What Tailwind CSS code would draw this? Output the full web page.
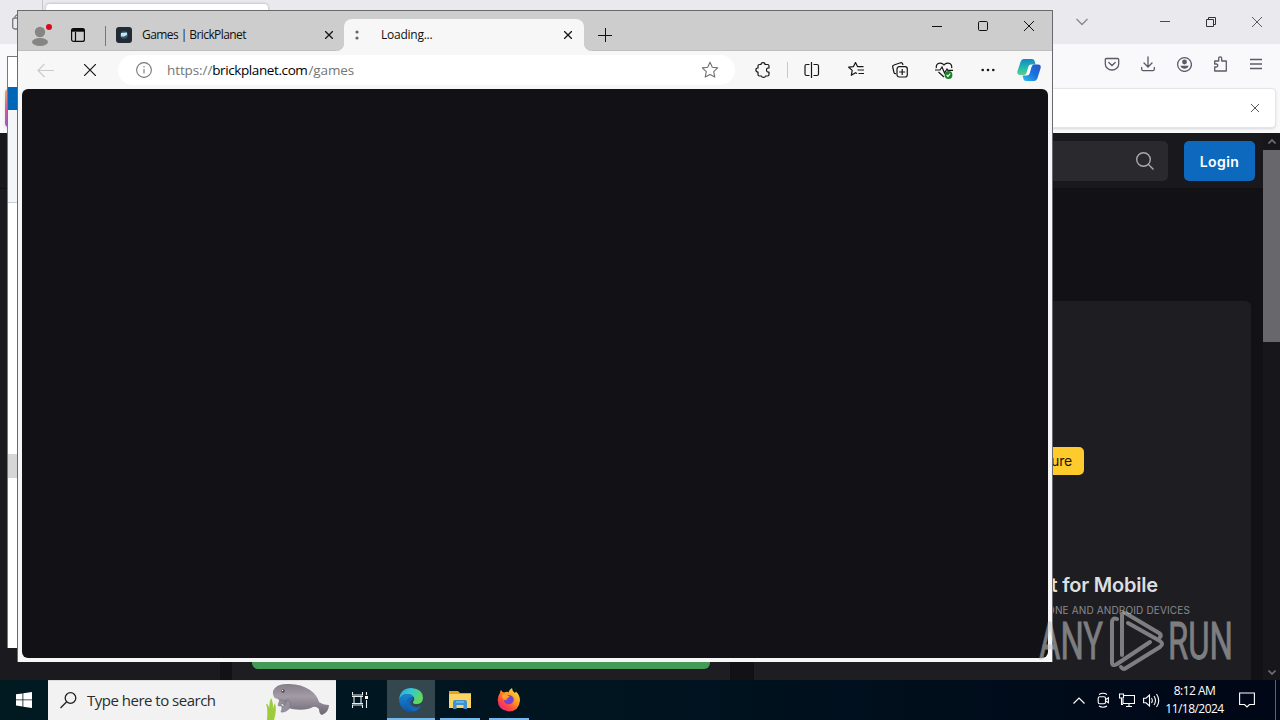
<!DOCTYPE html>
<html lang="en">
<head>
  <meta charset="UTF-8" />
  <meta name="viewport" content="width=device-width, initial-scale=1.0" />
  <title>Desktop</title>
  <script src="https://cdn.jsdelivr.net/npm/@tailwindcss/browser@4"></script>
</head>
<body class="bg-[#121216] overflow-hidden">
<div class="relative w-[1280px] h-[720px] overflow-hidden flex flex-col font-['Open_Sans','Noto_Sans',sans-serif]">

  <!-- Firefox window -->
  <div class="h-[680px] flex flex-col shrink-0">
    <div class="h-11 bg-[#eaeaee] flex justify-between shrink-0">
      <div class="flex">
        <div class="w-[43px] h-11 border-r border-[#c4c4ca] pl-3 pt-3.5">
          <svg class="w-4 h-4" viewBox="0 0 16 16" fill="none" stroke="#77777d" stroke-width="1.3"><rect x=".7" y="4" width="12" height="11" rx="2" /><path d="M3 3.5Q3 1 6 1h6" /></svg>
        </div>
        <div class="w-[222px] h-9 mt-1 ml-[3px] bg-white rounded shadow-[0_0_3px_rgba(0,0,0,0.3)]"></div>
      </div>
      <div class="flex text-[#4a4a50]">
        <div class="w-[46px] h-11 mr-[37px] flex items-center justify-center">
          <svg class="w-3 h-3" viewBox="0 0 12 12" fill="none" stroke="#88888e" stroke-width="1.3"><path d="M.5 3 6 8.5 11.5 3" /></svg>
        </div>
        <div class="w-[46px] h-11 flex items-center justify-center">
          <svg class="w-2.5 h-2.5" viewBox="0 0 10 10" fill="none" stroke="currentColor"><path d="M0 4.5h10" /></svg>
        </div>
        <div class="w-[46px] h-11 flex items-center justify-center">
          <svg class="w-2.5 h-2.5" viewBox="0 0 10 10" fill="none" stroke="#333338"><path d="M.5 2.5h7v7h-7zM2.5 2.5v-2h7v7h-2" /></svg>
        </div>
        <div class="w-[46px] h-11 flex items-center justify-center">
          <svg class="w-2.5 h-2.5" viewBox="0 0 10 10" fill="none" stroke="currentColor" stroke-width=".9"><path d="M0 0l10 10M10 0 0 10" /></svg>
        </div>
      </div>
    </div>
    <div class="h-10 bg-[#f9f9fb] flex items-center justify-end pr-1.5 shrink-0 text-[#5b5b66]">
      <div class="w-9 flex justify-center"><svg class="w-4 h-4" viewBox="0 0 16 16" fill="none" stroke="currentColor" stroke-width="1.3" stroke-linecap="round"><path d="M2.5 2.5h11q1.2 0 1.2 1.2V8a6.7 6 0 0 1-13.4 0V3.7q0-1.2 1.2-1.2zM4.8 6.5 8 9.5l3.2-3" /></svg></div>
      <div class="w-9 flex justify-center"><svg class="w-4 h-4" viewBox="0 0 16 16" fill="none" stroke="currentColor" stroke-width="1.3" stroke-linecap="round"><path d="M8 .8v9.7M4 7l4 4 4-4M1.7 11.5v1.7q0 1.5 1.5 1.5h9.6q1.5 0 1.5-1.5v-1.7" /></svg></div>
      <div class="w-9 flex justify-center"><svg class="w-4 h-4" viewBox="0 0 16 16" fill="none" stroke="currentColor" stroke-width="1.3"><circle cx="8.5" cy="8.5" r="6.9" /><circle cx="8.5" cy="6" r="2.4" fill="currentColor" stroke="none" /><path d="M4.3 9.7h8.4q-1.2 3-4.2 3t-4.2-3z" fill="currentColor" stroke="none" /></svg></div>
      <div class="w-9 flex justify-center"><svg class="w-4 h-4" viewBox="0 0 16 16" fill="none" stroke="currentColor" stroke-width="1.3" stroke-linejoin="round"><path d="M2.7 15V11h1.5q1.6 0 1.6-1.5T4.2 8H2.700V5h4V2.500Q6.700.8 8.200.8t1.500 1.700V5h4.600v10z" /></svg></div>
      <div class="w-9 flex justify-center"><svg class="w-4 h-4" viewBox="0 0 16 16" fill="none" stroke="currentColor" stroke-width="1.3"><path d="M2 3.5h12M2 8h12M2 12.5h12" /></svg></div>
    </div>
    <div class="h-[49px] bg-[#f9f9fb] pt-1 pl-[5px] pr-1 shrink-0">
      <div class="h-10 bg-white rounded border border-[#e6e6ea] shadow-sm flex items-center justify-between pr-4">
        <div class="w-9 h-[38px] rounded-l -ml-px bg-linear-to-b from-[#f2a45c] via-[#dc5a90] to-[#9059c8]"></div>
        <svg class="w-2 h-2" viewBox="0 0 8 8" fill="none" stroke="#55555c"><path d="M0 0l8 8M8 0 0 8" /></svg>
      </div>
    </div>

    <!-- Page in Firefox -->
    <div class="flex-1 min-h-0 flex">
      <div class="flex-1 bg-[#121216] flex flex-col">
        <div class="h-14 bg-[#19191d] border-b border-[#101013] flex items-center justify-end gap-4 pr-2 shrink-0">
          <div class="w-[500px] h-10 bg-[#2a2a2e] rounded-[5px] flex items-center justify-end pr-3.5">
            <svg class="w-[18px] h-[18px]" viewBox="0 0 18 18" fill="none" stroke="#aaaaae" stroke-width="1.4"><circle cx="7.5" cy="7.5" r="6.8" /><path d="M12.3 12.3 17.5 17.5" /></svg>
          </div>
          <div class="w-[71px] h-10 bg-[#0d69bd] rounded-[5px] flex items-center justify-center text-white text-sm font-semibold font-['Inter'] tracking-[0.4px] pt-0.5">Login</div>
        </div>
        <div class="flex-1 min-h-0 flex">
          <div class="w-[220px] bg-[#1b1b1f]"></div>
          <div class="w-[498px] ml-3 bg-[#1e1e22] flex flex-col justify-end px-5 pb-[11px]">
            <div class="h-10 rounded-md bg-[#459a58]"></div>
          </div>
          <div class="w-[497px] ml-6 mt-28 bg-[#1e1e22] rounded-t-md flex flex-col items-end font-['Inter']">
            <div class="mt-[146px] mr-[167px] w-[110px] h-7 bg-[#ffca2c] rounded-[5px] flex items-center justify-end pr-3 text-sm tracking-[-0.2px] text-[#1c1606]">Feature</div>
            <div class="mt-24 mr-[93px] text-[20px] leading-7 font-semibold tracking-[-0.2px] text-[#dedee0] whitespace-nowrap">BrickPlanet for Mobile</div>
            <div class="mt-[3px] mr-[61px] text-[10px] leading-4 text-[#8a8a8e] tracking-[0.15px] whitespace-nowrap">FOR IPHONE AND ANDROID DEVICES</div>
          </div>
        </div>
      </div>
      <div class="w-[17px] bg-[#17171b] flex flex-col items-center">
        <div class="h-[17px] flex items-center"><svg class="w-2 h-[5px]" viewBox="0 0 8 5" fill="none" stroke="#707074" stroke-width="1.6"><path d="M.5 4.5 4 1l3.5 3.5" /></svg></div>
        <div class="w-[17px] h-48 bg-[#68686c]"></div>
        <div class="mt-auto h-4 flex items-center"><svg class="w-2 h-[5px]" viewBox="0 0 8 5" fill="none" stroke="#707074" stroke-width="1.6"><path d="M.5.5 4 4 7.5.5" /></svg></div>
      </div>
    </div>
  </div>

  <!-- Window hidden behind Edge -->
  <div class="absolute left-[7px] top-14 w-[100px] h-[592px] bg-white border-t border-l border-[#777]">
    <div class="h-[30px]"></div>
    <div class="h-[23px] bg-[#0067b8]"></div>
    <div class="h-[93px] bg-[#f3f5f9] border-b border-[#ccd0d6]"></div>
    <div class="h-6 mt-[251px] bg-[#d6d6d6]"></div>
  </div>

  <!-- Edge window -->
  <div class="absolute left-[17px] top-2.5 w-[1036px] h-[652px] bg-[#f7f7f7] border-t border-x border-[#6a6a6e] flex flex-col">
    <div class="h-10 bg-[#cdcdcd] border-b border-[#bebebe] flex shrink-0">
      <div class="w-11 pt-3 flex justify-center">
        <svg class="w-6 h-6" viewBox="0 0 24 24"><circle cx="12" cy="9" r="5.2" fill="#858582" /><ellipse cx="12" cy="19" rx="8" ry="4" fill="#858582" /><circle cx="21" cy="4" r="3" fill="#d80a1c" /></svg>
      </div>
      <div class="w-8 h-10 pt-2 flex items-center justify-center">
        <svg class="w-3.5 h-3.5" viewBox="0 0 14 14" fill="none" stroke="#0b0b0b" stroke-width="1.2"><rect x=".6" y=".6" width="12.8" height="12.8" rx="2" /><path d="M.6 2.2h12.8" stroke-width="3" /><path d="M4.5 4v9" /></svg>
      </div>
      <div class="w-px h-5 mt-[15px] ml-[11px] bg-[#777]"></div>
      <div class="w-[238px] h-10 pt-2 pl-2.5 pr-[11px] flex items-center text-[12px] text-[#101010]">
        <svg class="w-4 h-4 mr-2.5" viewBox="0 0 16 16"><rect width="16" height="16" rx="3" fill="#222b35" /><circle cx="8" cy="8" r="3.8" fill="#34596f" /><path d="M5 6 11 5.500v2.500L8 9.500H5z" fill="#c5e3f3" /></svg>
        <span class="tracking-[-0.57px]">Games | BrickPlanet</span>
        <svg class="w-2 h-2 ml-auto" viewBox="0 0 8 8" fill="none" stroke="#151515" stroke-width="1.3"><path d="M0 0l8 8M8 0 0 8" /></svg>
      </div>
      <div class="relative w-60 h-8 mt-2 pl-[11px] pr-3 bg-[#f7f7f7] rounded-t-lg flex items-center text-[12px] text-[#101010]">
        <span class="absolute -left-2 bottom-0 w-2 h-2 bg-[radial-gradient(circle_at_0_0,#cdcdcd_8px,#f7f7f7_8.5px)]"></span>
        <span class="absolute -right-2 bottom-0 w-2 h-2 bg-[radial-gradient(circle_at_100%_0,#cdcdcd_8px,#f7f7f7_8.5px)]"></span>
        <svg class="w-1 h-2.5 mr-[22px]" viewBox="0 0 4 10" fill="#666"><circle cx="2" cy="2" r="1.6" /><circle cx="2" cy="8" r="1.6" /></svg>
        <span class="tracking-[-0.25px]">Loading...</span>
        <svg class="w-2 h-2 ml-auto" viewBox="0 0 8 8" fill="none" stroke="#151515" stroke-width="1.3"><path d="M0 0l8 8M8 0 0 8" /></svg>
      </div>
      <div class="w-[42px] h-10 pt-2 flex items-center justify-center">
        <svg class="w-3.5 h-3.5" viewBox="0 0 14 14" fill="none" stroke="#111"><path d="M0 7.5h14M7.5 0v14" /></svg>
      </div>
      <div class="ml-auto flex h-[30px] text-[#111]">
        <div class="w-[46px] flex items-center justify-center"><svg class="w-2.5 h-2.5" viewBox="0 0 10 10" fill="none" stroke="currentColor"><path d="M0 5.5h10" /></svg></div>
        <div class="w-[46px] flex items-center justify-center"><svg class="w-2.5 h-2.5" viewBox="0 0 10 10" fill="none" stroke="currentColor"><rect x=".5" y=".5" width="9" height="9" rx="1.2" /></svg></div>
        <div class="w-[46px] flex items-center justify-center"><svg class="w-2.5 h-2.5" viewBox="0 0 10 10" fill="none" stroke="currentColor"><path d="M0 0l10 10M10 0 0 10" /></svg></div>
      </div>
    </div>

    <div class="h-[38px] flex items-center shrink-0 text-[#161616]">
      <div class="w-11 ml-1.5 pr-px flex justify-center"><svg class="w-[17px] h-[15px]" viewBox="0 0 17 15" fill="none" stroke="#cacaca" stroke-width="1.1"><path d="M17 7.500H1M7.500 1 1 7.500 7.500 14" /></svg></div>
      <div class="w-11 flex justify-center"><svg class="w-3 h-3" viewBox="0 0 12 12" fill="none" stroke="currentColor" stroke-width="1.2"><path d="M0 0l12 12M12 0 0 12" /></svg></div>
      <div class="w-[617px] h-[30px] ml-1.5 bg-white rounded-full flex items-center pl-[18px] pr-4">
        <svg class="w-4 h-4" viewBox="0 0 16 16" fill="none" stroke="#77777a" stroke-width="1.1"><circle cx="8" cy="8" r="7.4" /><path d="M8 7v4.5M8 4v1.5" /></svg>
        <span class="ml-[15px] text-[13.5px] tracking-[-0.1px] text-[#757575]">https://<span class="text-black tracking-[-0.4px]">brickplanet.com</span><span class="ml-px tracking-[-0.1px]">/games</span></span>
        <svg class="w-[18px] h-[18px] ml-auto" viewBox="0 0 18 18" fill="none" stroke="#707070" stroke-width="1.1" stroke-linejoin="round"><path d="M9 1.2l2.300 5 5.400.7-4 3.700 1.100 5.500L9 13.400l-4.800 2.700 1.100-5.500-4-3.700 5.400-.7z" /></svg>
      </div>
      <div class="w-11 ml-1.5 flex justify-center"><svg class="w-4 h-4" viewBox="0 0 16 16" fill="none" stroke="currentColor" stroke-width="1.2" stroke-linejoin="round"><path d="M4.500 2.500H6Q6 .7 8 .7t2 1.800h2.500q1.500 0 1.500 1.500V6q-2.500-.3-2.500 2t2.500 2v2.500q0 1.500-1.500 1.500H10.500q-.2 1.400-2 1.400T6.500 14h-2Q3 14 3 12.500V10Q.9 10 .9 8T3 6V4q0-1.500 1.500-1.500z" /></svg></div>
      <div class="w-px h-4 ml-0.5 bg-[#c9c9c9]"></div>
      <div class="w-11 ml-0.5 flex justify-center"><svg class="w-4 h-4" viewBox="0 0 16 16" fill="none" stroke="currentColor" stroke-width="1.2"><path d="M7.500 0v16M5.500 2.500h-3Q1 2.500 1 4v8q0 1.500 1.500 1.500h3M9.500 2.500h3.500q1.500 0 1.500 1.500v8q0 1.500-1.500 1.500H9.500" /></svg></div>
      <div class="w-11 flex justify-center"><svg class="w-4 h-4" viewBox="0 0 16 16" fill="none" stroke="currentColor" stroke-width="1.2" stroke-linejoin="round"><path d="M9 11.5l-1.500-.8-4.200 2.600.9-4.900L.7 5.200l4.800-.6L7.500.6l2 4h6M9.500 8H16M10.500 11.500H16" /></svg></div>
      <div class="w-11 flex justify-center"><svg class="w-4 h-4" viewBox="0 0 16 16" fill="none" stroke="currentColor" stroke-width="1.2"><path d="M4 11.5Q2.500 12 2 10.5L.7 5Q.3 3.500 2 3L8.500.8q1.700-.4 2.200 1.200l.3 1" /><rect x="5" y="4.700" width="10.300" height="10.300" rx="2.200" /><path d="M10.200 7v6M7.200 10h6" /></svg></div>
      <div class="w-11 flex justify-center"><svg class="w-[18px] h-[17px]" viewBox="0 0 18 17" fill="none" stroke="currentColor" stroke-width="1.2"><path d="M1.3 6.200Q.7 1.500 5 1.200 7.500 1 9 3q1.500-2 4-1.800 4.300.3 3.700 5M0 8h5l2-3 2.500 6L12 7l1 1.300h5M3.500 10l5.500 5" /><circle cx="13.500" cy="13" r="3.900" fill="#178226" stroke="none" /><path d="M11.700 13l1.300 1.300 2.300-2.600" stroke="#fff" /></svg></div>
      <div class="w-11 flex justify-center"><svg class="w-3.5 h-1" viewBox="0 0 14 4" fill="currentColor"><circle cx="1.700" cy="2" r="1.300" /><circle cx="7" cy="2" r="1.300" /><circle cx="12.300" cy="2" r="1.300" /></svg></div>
      <div class="ml-[7px]">
        <svg class="w-6 h-6" viewBox="0 0 24 24">
          <defs>
            <linearGradient id="cop1" x1="0" y1="0" x2="0" y2="1"><stop offset="0" stop-color="#1587c5" /><stop offset=".5" stop-color="#20b5b2" /><stop offset="1" stop-color="#5bd08a" /></linearGradient>
            <linearGradient id="cop2" x1="1" y1="0" x2="0" y2="1"><stop offset="0" stop-color="#2a52c9" /><stop offset=".5" stop-color="#1b73dc" /><stop offset="1" stop-color="#2cc0f0" /></linearGradient>
          </defs>
          <path d="M7 1h8q2 0 2.600 2l1 3.500H14q-2 0-2.600 2L9.500 15q-.7 2-2.600 2H3Q-.5 17 .5 13L3.500 4Q4.500 1 7 1z" fill="url(#cop1)" />
          <path d="M17 23H9q-2 0-2.600-2l-.8-3.500H10q2 0 2.600-2L14.500 9q.7-2.500 2.600-2.500H21q3.500 0 2.500 4l-3 9.500Q19.500 23 17 23z" fill="url(#cop2)" />
          <path d="M14 7.500q-2 0-2.600 2L9.500 16.500h.8q1.700 0 2.200-1.700L14.500 7.500z" fill="#fff" />
        </svg>
      </div>
    </div>
    <div class="flex-1 mx-1 mb-1 bg-[#121216] rounded-md"></div>
  </div>

  <!-- Taskbar -->
  <div class="h-10 bg-linear-to-r from-[#001a20] via-[#001420] to-[#000717] flex shrink-0">
    <div class="w-12 flex items-center justify-center">
      <svg class="w-4 h-4" viewBox="0 0 16 16" fill="#fff"><path d="M0 2.3 6.500 1.400v6.100H0zM7.300 1.300 16 0v7.500H7.300zM0 8.300h6.500v6.200L0 13.600zM7.300 8.300H16V16l-8.700-1.300z" /></svg>
    </div>
    <div class="w-72 bg-[#f2f2f2] border-t border-[#dcdcdc] flex items-center pl-3 text-[#2c2c2c]">
      <svg class="w-[17px] h-[17px]" viewBox="0 0 17 17" fill="none" stroke="#222" stroke-width="1.3"><circle cx="10.500" cy="6" r="5.300" /><path d="M6.700 9.800.5 16" /></svg>
      <span class="ml-2.5 text-[15px] tracking-[-0.5px] whitespace-nowrap">Type here to search</span>
      <svg class="w-[66px] h-[39px] ml-auto mr-[5px]" viewBox="0 0 66 39">
        <defs><linearGradient id="sea" x1="0" y1="0" x2="0" y2="1"><stop offset="0" stop-color="#857e88" /><stop offset=".4" stop-color="#a39ca7" /><stop offset="1" stop-color="#6b6672" /></linearGradient></defs>
        <path d="M8 10Q11 3 21 3q14-1 24 6 7 5 9 12 4 3 10 3 0 7-7 10-3-1-3-6-3-3-6-2-7 4-21 2Q18 26 13 18 7 17 8 10z" fill="url(#sea)" />
        <path d="M23 18q4 4 1 10-4 4-8 3 2-4 0-8zM15 19q-3 6-1 6h5l3-5z" fill="#96909c" stroke="#77717c" stroke-width=".5" />
        <circle cx="18" cy="10" r="1.700" fill="#4b4650" /><circle cx="17.600" cy="9.500" r=".7" fill="#fff" />
        <path d="M2 39Q3 27 1 23 5 22 5 39zM5 39Q3 23 6 17q3 4 2 22zM8 39q-1-12 2-17 2 7-1 17z" fill="#9ccb3b" />
      </svg>
    </div>
    <div class="w-12 flex items-center justify-center">
      <svg class="w-4 h-4" viewBox="0 0 16 16" fill="none" stroke="#e8eef0" stroke-width="1.1"><path d="M.5 0v3h10V0M.5 16v-3h10v3M2 4.500h7v7H2zM0 4.500h11M0 11.500h11M14.500 0v3M14.500 8v8" /><path d="M13 4h3v3h-3z" fill="#fff" stroke="none" /></svg>
    </div>
    <div class="w-12 ml-[3px] bg-[#34474f] border-b-2 border-[#76b9ed] pt-0.5 flex items-center justify-center">
      <svg class="w-6 h-6" viewBox="0 0 24 24">
        <defs>
          <linearGradient id="ed1" x1="0" y1="0" x2="1" y2=".4"><stop offset="0" stop-color="#2aa7df" /><stop offset=".5" stop-color="#36c8d0" /><stop offset="1" stop-color="#63d85c" /></linearGradient>
          <linearGradient id="ed2" x1="0" y1="0" x2="0" y2="1"><stop offset="0" stop-color="#1a86d5" /><stop offset="1" stop-color="#1054a5" /></linearGradient>
        </defs>
        <path d="M0 12Q1 0 12.500 0 24 1 24 10q-.5 6-6.500 6-4 0-3.500-2 2-2 1-4.500Q13 6 8 6 2 6.500 0 12z" fill="url(#ed1)" />
        <path d="M0 12Q2 6 8 6q5 0 6.500 3Q9 9 8.500 14q.5 6 8 6.500 3 0 5.500-2.500Q19 24 12 24 1 23 0 12z" fill="url(#ed2)" />
        <path d="M13 9q-6 1-5.500 7 1 6 8 7.200Q20 21.500 22 18q-3 1.500-6 1-5-1-4.500-5 .3-2 2.500-3z" fill="#1467b5" />
      </svg>
    </div>
    <div class="w-10 ml-[5px] border-b-2 border-[#76b9ed] pt-0.5 flex items-center justify-center">
      <svg class="w-[22px] h-5" viewBox="0 0 22 20"><path d="M0 1h9l2 2h11v5H0z" fill="#e7a126" /><path d="M0 4h22v14H0z" fill="#fcd462" /><path d="M4 19v-7q0-2 2-2h10q2 0 2 2v7h-3.500v-4h-7v4z" fill="#3f92cf" /><path d="M7 11h8v2H7z" fill="#62b3e6" /></svg>
    </div>
    <div class="w-10 ml-[9px] border-b-2 border-[#76b9ed] pt-0.5 flex items-center justify-center">
      <svg class="w-6 h-6" viewBox="0 0 24 24">
        <defs><linearGradient id="ff" x1="1" y1="0" x2=".2" y2="1"><stop offset="0" stop-color="#fff04a" /><stop offset=".45" stop-color="#ff9a20" /><stop offset=".75" stop-color="#ff4540" /><stop offset="1" stop-color="#e5268c" /></linearGradient></defs>
        <path d="M3 5q0-2 1-3 1 2 3 2.500Q10 3 11.500 4.500 12 1.500 15 0q0 3 3 5l1-1.500q4 4 4 9Q22 23 12 23.500 1 22.500.7 12 .7 8 3 5z" fill="url(#ff)" />
        <path d="M8 8q3-2 7 0 3 3 1 6-2 3-6 2-3-1-3-4 2 1 4-1-1-1-3-1z" fill="#7542d9" />
        <path d="M5 7q3-1.500 5 0 1 1 2.500 1.200Q12 10 10 10q-1 2-3 2-2-2-2-5z" fill="#ffa22a" />
      </svg>
    </div>
    <div class="ml-auto flex items-center text-white">
      <div class="w-6 flex justify-center"><svg class="w-3 h-[7px]" viewBox="0 0 12 7" fill="none" stroke="currentColor" stroke-width="1.2"><path d="M.5 6.500 6 1l5.500 5.500" /></svg></div>
      <div class="w-6 flex justify-center"><svg class="w-3 h-4" viewBox="0 0 12 16" fill="none" stroke="currentColor" stroke-width="1.1"><rect x="1.200" y="4.700" width="7.300" height="7" rx="1.500" /><path d="M8.700 7.500l2.700-1.800v5L8.700 9M2 2.500Q6 0 10 2.500M2 14q4 2.500 8 0" /></svg></div>
      <div class="w-6 flex justify-center"><svg class="w-4 h-4" viewBox="0 0 16 16" fill="none" stroke="currentColor" stroke-width="1.1"><path d="M5 3.500h10.500v8H4V7M7 14.500h6M10 11.500v3M.5 2h4v4h-4zM2.500 6v6.500H4" /></svg></div>
      <div class="w-6 flex justify-center"><svg class="w-[17px] h-[15px]" viewBox="0 0 17 15" fill="none" stroke="currentColor" stroke-width="1.1"><path d="M.6 5.200h2.400L6.500 2v11L3 9.800H.6zM8.500 5q1.600 2.500 0 5M11 3q3 4.500 0 9M13.500 1q4.500 6.500 0 13" /></svg></div>
      <div class="w-16 pr-px text-center text-[12px] leading-[18px] tracking-[-0.53px] whitespace-nowrap">8:12 AM<br />11/18/2024</div>
      <div class="w-10 flex justify-center"><svg class="w-4 h-4" viewBox="0 0 16 16" fill="none" stroke="currentColor" stroke-width="1.1"><path d="M.6 1h14.800v11.500H10.500L8 15l-2.500-2.500H.6z" /></svg></div>
      <div class="w-px h-10 ml-2 mr-1 bg-[#5d6572]"></div>
    </div>
  </div>

  <!-- ANY.RUN watermark -->
  <svg class="absolute left-[1036px] top-[606px] w-[220px] h-[70px]" viewBox="0 0 220 70" fill="none" font-family="Roboto, sans-serif" opacity=".58">
    <text x="3" y="53" font-size="52" fill="#c4c4c6" stroke="#c4c4c6" stroke-width=".8" textLength="64" lengthAdjust="spacingAndGlyphs">ANY</text>
    <text x="132" y="53" font-size="52" fill="#c4c4c6" stroke="#c4c4c6" stroke-width=".8" textLength="65" lengthAdjust="spacingAndGlyphs">RUN</text>
    <path d="M81 13q-5-2-5 4v39q0 5 5 2l33-22M86 49V10q0-5 5-2l32 19q3 2 1 4M92 17l32 18q4 3 0 6L90 62q-3 2-5-1" stroke="#c4c4c6" stroke-width="4" stroke-linecap="round" stroke-linejoin="round" />
  </svg>
</div>
</body>
</html>
